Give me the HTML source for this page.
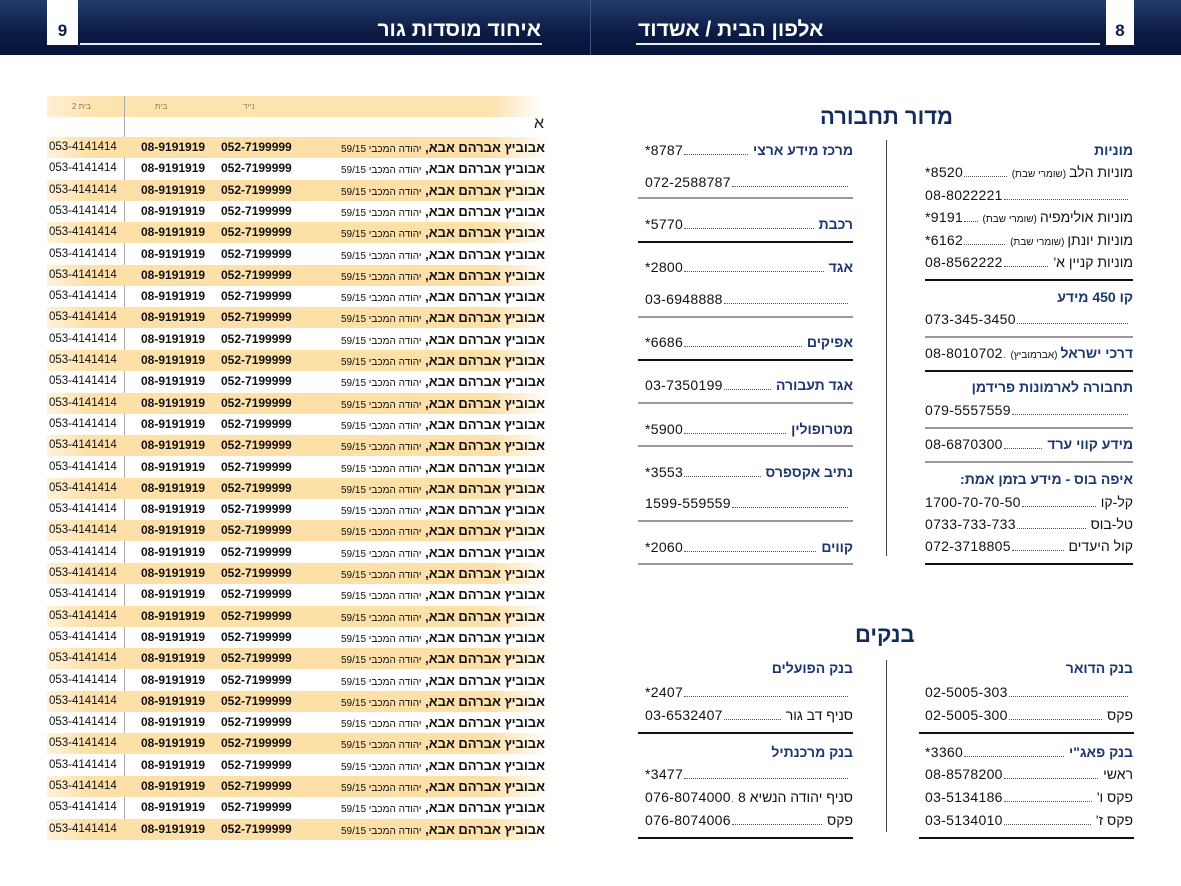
<!DOCTYPE html>
<html><head><meta charset="utf-8">
<style>
*{margin:0;padding:0;box-sizing:border-box}
body{width:1181px;height:886px;position:relative;background:#fff;overflow:hidden;font-family:"Liberation Sans","Noto Sans CJK SC",sans-serif;color:#111}
.hdr{position:absolute;left:0;top:0;width:1181px;height:55px;background:linear-gradient(#233b6b,#0b1b44 60%,#06143a)}
.pg{position:absolute;top:0;height:45px;background:#fff;color:#0d1f4d;font-weight:bold;font-size:17px;text-align:center;line-height:62px}
.ttl{position:absolute;top:18px;color:#fff;font-weight:bold;font-size:21px;line-height:24px;direction:rtl}
.ul{position:absolute;top:43px;height:2px;background:#e8ecf4}
.abs{position:absolute}
.r{position:absolute;width:208px;height:20px;line-height:20px;display:flex;direction:rtl;align-items:baseline;font-size:14px;white-space:nowrap}
.r .f{flex:1;border-bottom:1px dotted #555;margin:0 5px 0 1px;height:14px}
.r .n{direction:ltr;font-size:14px;letter-spacing:.3px}
.h{color:#1a3570;font-weight:bold}
.s{font-size:10px;margin-right:3px}
.ln{position:absolute;width:208px;height:2px;background:#111}
.lg{background:#999}
.big{position:absolute;color:#132a5c;font-weight:bold;font-size:22px;direction:rtl}
.row{position:absolute;left:47px;width:504px;height:21px;line-height:21px;font-size:12px}
.sh{background:linear-gradient(to right,rgba(253,224,168,.4),#fde0a8 8%,#fde0a8 88%,rgba(253,224,168,0))}
.row .nm{position:absolute;right:6px;direction:rtl;font-weight:bold;font-size:13px}
.row .nm small{font-weight:normal;font-size:10px}
.row .m{position:absolute;left:174px;font-weight:bold}
.row .hm{position:absolute;left:94px;font-weight:bold}
.row .h2{position:absolute;left:2px;font-size:11.5px}
</style></head><body>
<div class="hdr"></div>
<div class="abs" style="left:590px;top:0;width:1px;height:55px;background:#3d5385"></div>
<div class="pg" style="left:47px;width:31px">9</div>
<div class="pg" style="left:1106px;width:28px">8</div>
<div class="ttl" style="right:640px">איחוד מוסדות גור</div>
<div class="ttl" style="left:638px">אלפון הבית / אשדוד</div>
<div class="ul" style="left:80px;width:462px"></div>
<div class="ul" style="left:636px;width:464px"></div>

<!-- LEFT TABLE -->
<div class="abs" style="left:47px;top:96px;width:495px;height:21px;background:linear-gradient(to right,rgba(253,224,168,.5),#fde3ae 10%,#fde3ae 90%,rgba(253,224,168,0));font-size:8px;color:#8a7a5a;direction:rtl">
<span class="abs" style="left:25px;top:6px">בית 2</span><span class="abs" style="left:108px;top:6px">בית</span><span class="abs" style="left:196px;top:6px">נייד</span></div>
<div class="abs" style="left:534px;top:115px;font-size:16px;color:#222">א</div>
<div class="abs" style="left:124px;top:96px;width:1px;height:744px;background:#aaa"></div>
<div class="row sh" style="top:137px"><span class="nm">אבוביץ אברהם אבא, <small>יהודה המכבי 59/15</small></span><span class="m">052-7199999</span><span class="hm">08-9191919</span><span class="h2">053-4141414</span></div>
<div class="row" style="top:158.3px"><span class="nm">אבוביץ אברהם אבא, <small>יהודה המכבי 59/15</small></span><span class="m">052-7199999</span><span class="hm">08-9191919</span><span class="h2">053-4141414</span></div>
<div class="row sh" style="top:179.6px"><span class="nm">אבוביץ אברהם אבא, <small>יהודה המכבי 59/15</small></span><span class="m">052-7199999</span><span class="hm">08-9191919</span><span class="h2">053-4141414</span></div>
<div class="row" style="top:200.9px"><span class="nm">אבוביץ אברהם אבא, <small>יהודה המכבי 59/15</small></span><span class="m">052-7199999</span><span class="hm">08-9191919</span><span class="h2">053-4141414</span></div>
<div class="row sh" style="top:222.2px"><span class="nm">אבוביץ אברהם אבא, <small>יהודה המכבי 59/15</small></span><span class="m">052-7199999</span><span class="hm">08-9191919</span><span class="h2">053-4141414</span></div>
<div class="row" style="top:243.5px"><span class="nm">אבוביץ אברהם אבא, <small>יהודה המכבי 59/15</small></span><span class="m">052-7199999</span><span class="hm">08-9191919</span><span class="h2">053-4141414</span></div>
<div class="row sh" style="top:264.8px"><span class="nm">אבוביץ אברהם אבא, <small>יהודה המכבי 59/15</small></span><span class="m">052-7199999</span><span class="hm">08-9191919</span><span class="h2">053-4141414</span></div>
<div class="row" style="top:286.1px"><span class="nm">אבוביץ אברהם אבא, <small>יהודה המכבי 59/15</small></span><span class="m">052-7199999</span><span class="hm">08-9191919</span><span class="h2">053-4141414</span></div>
<div class="row sh" style="top:307.4px"><span class="nm">אבוביץ אברהם אבא, <small>יהודה המכבי 59/15</small></span><span class="m">052-7199999</span><span class="hm">08-9191919</span><span class="h2">053-4141414</span></div>
<div class="row" style="top:328.7px"><span class="nm">אבוביץ אברהם אבא, <small>יהודה המכבי 59/15</small></span><span class="m">052-7199999</span><span class="hm">08-9191919</span><span class="h2">053-4141414</span></div>
<div class="row sh" style="top:350px"><span class="nm">אבוביץ אברהם אבא, <small>יהודה המכבי 59/15</small></span><span class="m">052-7199999</span><span class="hm">08-9191919</span><span class="h2">053-4141414</span></div>
<div class="row" style="top:371.3px"><span class="nm">אבוביץ אברהם אבא, <small>יהודה המכבי 59/15</small></span><span class="m">052-7199999</span><span class="hm">08-9191919</span><span class="h2">053-4141414</span></div>
<div class="row sh" style="top:392.6px"><span class="nm">אבוביץ אברהם אבא, <small>יהודה המכבי 59/15</small></span><span class="m">052-7199999</span><span class="hm">08-9191919</span><span class="h2">053-4141414</span></div>
<div class="row" style="top:413.9px"><span class="nm">אבוביץ אברהם אבא, <small>יהודה המכבי 59/15</small></span><span class="m">052-7199999</span><span class="hm">08-9191919</span><span class="h2">053-4141414</span></div>
<div class="row sh" style="top:435.2px"><span class="nm">אבוביץ אברהם אבא, <small>יהודה המכבי 59/15</small></span><span class="m">052-7199999</span><span class="hm">08-9191919</span><span class="h2">053-4141414</span></div>
<div class="row" style="top:456.5px"><span class="nm">אבוביץ אברהם אבא, <small>יהודה המכבי 59/15</small></span><span class="m">052-7199999</span><span class="hm">08-9191919</span><span class="h2">053-4141414</span></div>
<div class="row sh" style="top:477.8px"><span class="nm">אבוביץ אברהם אבא, <small>יהודה המכבי 59/15</small></span><span class="m">052-7199999</span><span class="hm">08-9191919</span><span class="h2">053-4141414</span></div>
<div class="row" style="top:499.1px"><span class="nm">אבוביץ אברהם אבא, <small>יהודה המכבי 59/15</small></span><span class="m">052-7199999</span><span class="hm">08-9191919</span><span class="h2">053-4141414</span></div>
<div class="row sh" style="top:520.4px"><span class="nm">אבוביץ אברהם אבא, <small>יהודה המכבי 59/15</small></span><span class="m">052-7199999</span><span class="hm">08-9191919</span><span class="h2">053-4141414</span></div>
<div class="row" style="top:541.7px"><span class="nm">אבוביץ אברהם אבא, <small>יהודה המכבי 59/15</small></span><span class="m">052-7199999</span><span class="hm">08-9191919</span><span class="h2">053-4141414</span></div>
<div class="row sh" style="top:563px"><span class="nm">אבוביץ אברהם אבא, <small>יהודה המכבי 59/15</small></span><span class="m">052-7199999</span><span class="hm">08-9191919</span><span class="h2">053-4141414</span></div>
<div class="row" style="top:584.3px"><span class="nm">אבוביץ אברהם אבא, <small>יהודה המכבי 59/15</small></span><span class="m">052-7199999</span><span class="hm">08-9191919</span><span class="h2">053-4141414</span></div>
<div class="row sh" style="top:605.6px"><span class="nm">אבוביץ אברהם אבא, <small>יהודה המכבי 59/15</small></span><span class="m">052-7199999</span><span class="hm">08-9191919</span><span class="h2">053-4141414</span></div>
<div class="row" style="top:626.9px"><span class="nm">אבוביץ אברהם אבא, <small>יהודה המכבי 59/15</small></span><span class="m">052-7199999</span><span class="hm">08-9191919</span><span class="h2">053-4141414</span></div>
<div class="row sh" style="top:648.2px"><span class="nm">אבוביץ אברהם אבא, <small>יהודה המכבי 59/15</small></span><span class="m">052-7199999</span><span class="hm">08-9191919</span><span class="h2">053-4141414</span></div>
<div class="row" style="top:669.5px"><span class="nm">אבוביץ אברהם אבא, <small>יהודה המכבי 59/15</small></span><span class="m">052-7199999</span><span class="hm">08-9191919</span><span class="h2">053-4141414</span></div>
<div class="row sh" style="top:690.8px"><span class="nm">אבוביץ אברהם אבא, <small>יהודה המכבי 59/15</small></span><span class="m">052-7199999</span><span class="hm">08-9191919</span><span class="h2">053-4141414</span></div>
<div class="row" style="top:712.1px"><span class="nm">אבוביץ אברהם אבא, <small>יהודה המכבי 59/15</small></span><span class="m">052-7199999</span><span class="hm">08-9191919</span><span class="h2">053-4141414</span></div>
<div class="row sh" style="top:733.4px"><span class="nm">אבוביץ אברהם אבא, <small>יהודה המכבי 59/15</small></span><span class="m">052-7199999</span><span class="hm">08-9191919</span><span class="h2">053-4141414</span></div>
<div class="row" style="top:754.7px"><span class="nm">אבוביץ אברהם אבא, <small>יהודה המכבי 59/15</small></span><span class="m">052-7199999</span><span class="hm">08-9191919</span><span class="h2">053-4141414</span></div>
<div class="row sh" style="top:776px"><span class="nm">אבוביץ אברהם אבא, <small>יהודה המכבי 59/15</small></span><span class="m">052-7199999</span><span class="hm">08-9191919</span><span class="h2">053-4141414</span></div>
<div class="row" style="top:797.3px"><span class="nm">אבוביץ אברהם אבא, <small>יהודה המכבי 59/15</small></span><span class="m">052-7199999</span><span class="hm">08-9191919</span><span class="h2">053-4141414</span></div>
<div class="row sh" style="top:818.6px"><span class="nm">אבוביץ אברהם אבא, <small>יהודה המכבי 59/15</small></span><span class="m">052-7199999</span><span class="hm">08-9191919</span><span class="h2">053-4141414</span></div>

<!-- RIGHT PAGE -->
<div class="big" style="left:820px;top:104px">מדור תחבורה</div>
<div class="abs" style="left:886px;top:140px;width:1px;height:416px;background:#444"></div>

<div class="r" style="left:925px;top:140px"><span class="h">מוניות</span></div>
<div class="r" style="left:925px;top:162px"><span>מוניות הלב<span class="s">(שומרי שבת)</span></span><span class="f"></span><span class="n">*8520</span></div>
<div class="r" style="left:925px;top:185px"><span class="f"></span><span class="n">08-8022221</span></div>
<div class="r" style="left:925px;top:207px"><span>מוניות אולימפיה<span class="s">(שומרי שבת)</span></span><span class="f"></span><span class="n">*9191</span></div>
<div class="r" style="left:925px;top:230px"><span>מוניות יונתן<span class="s">(שומרי שבת)</span></span><span class="f"></span><span class="n">*6162</span></div>
<div class="r" style="left:925px;top:252px"><span>מוניות קניין א'</span><span class="f"></span><span class="n">08-8562222</span></div>
<div class="ln" style="left:925px;top:279px"></div>
<div class="r" style="left:925px;top:287px"><span class="h">קו 450 מידע</span></div>
<div class="r" style="left:925px;top:309px"><span class="f"></span><span class="n">073-345-3450</span></div>
<div class="ln lg" style="left:925px;top:336px"></div>
<div class="r" style="left:925px;top:343px"><span class="h">דרכי ישראל</span><span class="s">(אברמוביץ)</span><span class="f"></span><span class="n">08-8010702</span></div>
<div class="ln" style="left:925px;top:370px"></div>
<div class="r" style="left:925px;top:377px"><span class="h">תחבורה לארמונות פרידמן</span></div>
<div class="r" style="left:925px;top:400px"><span class="f"></span><span class="n">079-5557559</span></div>
<div class="ln lg" style="left:925px;top:427px"></div>
<div class="r" style="left:925px;top:434px"><span class="h">מידע קווי ערד</span><span class="f"></span><span class="n">08-6870300</span></div>
<div class="ln lg" style="left:925px;top:461px"></div>
<div class="r" style="left:925px;top:469px"><span class="h">איפה בוס - מידע בזמן אמת:</span></div>
<div class="r" style="left:925px;top:492px"><span>קל-קו</span><span class="f"></span><span class="n">1700-70-70-50</span></div>
<div class="r" style="left:925px;top:514px"><span>טל-בוס</span><span class="f"></span><span class="n">0733-733-733</span></div>
<div class="r" style="left:925px;top:536px"><span>קול היעדים</span><span class="f"></span><span class="n">072-3718805</span></div>
<div class="ln" style="left:925px;top:563px"></div>

<div class="r" style="left:645px;top:140px"><span class="h">מרכז מידע ארצי</span><span class="f"></span><span class="n">*8787</span></div>
<div class="r" style="left:645px;top:172px"><span class="f"></span><span class="n">072-2588787</span></div>
<div class="ln lg" style="left:638px;top:197px;width:215px"></div>
<div class="r" style="left:645px;top:214px"><span class="h">רכבת</span><span class="f"></span><span class="n">*5770</span></div>
<div class="ln" style="left:638px;top:241px;width:215px"></div>
<div class="r" style="left:645px;top:257px"><span class="h">אגד</span><span class="f"></span><span class="n">*2800</span></div>
<div class="r" style="left:645px;top:289px"><span class="f"></span><span class="n">03-6948888</span></div>
<div class="ln lg" style="left:638px;top:316px;width:215px"></div>
<div class="r" style="left:645px;top:332px"><span class="h">אפיקים</span><span class="f"></span><span class="n">*6686</span></div>
<div class="ln" style="left:638px;top:359px;width:215px"></div>
<div class="r" style="left:645px;top:375px"><span class="h">אגד תעבורה</span><span class="f"></span><span class="n">03-7350199</span></div>
<div class="ln lg" style="left:638px;top:402px;width:215px"></div>
<div class="r" style="left:645px;top:419px"><span class="h">מטרופולין</span><span class="f"></span><span class="n">*5900</span></div>
<div class="ln lg" style="left:638px;top:445px;width:215px"></div>
<div class="r" style="left:645px;top:462px"><span class="h">נתיב אקספרס</span><span class="f"></span><span class="n">*3553</span></div>
<div class="r" style="left:645px;top:493px"><span class="f"></span><span class="n">1599-559559</span></div>
<div class="ln lg" style="left:638px;top:520px;width:215px"></div>
<div class="r" style="left:645px;top:537px"><span class="h">קווים</span><span class="f"></span><span class="n">*2060</span></div>
<div class="ln lg" style="left:638px;top:563px;width:215px"></div>

<div class="big" style="left:855px;top:622px">בנקים</div>
<div class="abs" style="left:886px;top:660px;width:1px;height:172px;background:#444"></div>
<div class="r" style="left:925px;top:658px"><span class="h">בנק הדואר</span></div>
<div class="r" style="left:925px;top:682px"><span class="f"></span><span class="n">02-5005-303</span></div>
<div class="r" style="left:925px;top:705px"><span>פקס</span><span class="f"></span><span class="n">02-5005-300</span></div>
<div class="ln" style="left:919px;top:732px;width:215px"></div>
<div class="r" style="left:925px;top:742px"><span class="h">בנק פאג"י</span><span class="f"></span><span class="n">*3360</span></div>
<div class="r" style="left:925px;top:764px"><span>ראשי</span><span class="f"></span><span class="n">08-8578200</span></div>
<div class="r" style="left:925px;top:787px"><span>פקס ו'</span><span class="f"></span><span class="n">03-5134186</span></div>
<div class="r" style="left:925px;top:810px"><span>פקס ז'</span><span class="f"></span><span class="n">03-5134010</span></div>
<div class="ln" style="left:919px;top:837px;width:215px"></div>

<div class="r" style="left:645px;top:658px"><span class="h">בנק הפועלים</span></div>
<div class="r" style="left:645px;top:682px"><span class="f"></span><span class="n">*2407</span></div>
<div class="r" style="left:645px;top:705px"><span>סניף דב גור</span><span class="f"></span><span class="n">03-6532407</span></div>
<div class="ln" style="left:638px;top:732px;width:215px"></div>
<div class="r" style="left:645px;top:742px"><span class="h">בנק מרכנתיל</span></div>
<div class="r" style="left:645px;top:764px"><span class="f"></span><span class="n">*3477</span></div>
<div class="r" style="left:645px;top:787px"><span>סניף יהודה הנשיא 8</span><span class="f"></span><span class="n">076-8074000</span></div>
<div class="r" style="left:645px;top:810px"><span>פקס</span><span class="f"></span><span class="n">076-8074006</span></div>
<div class="ln" style="left:638px;top:837px;width:215px"></div>
</body></html>
